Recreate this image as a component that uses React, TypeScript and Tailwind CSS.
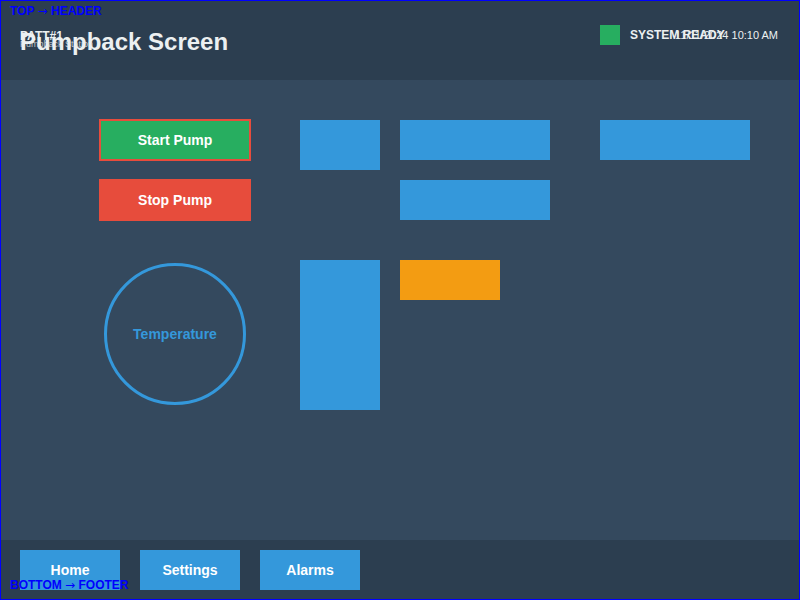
const font = "font-['Liberation_Sans',Arial,sans-serif]";

function Block({ className }: { className: string }) {
  return <div className={`bg-[#3498db] ${className}`} />;
}

function Arrow() {
  return <span className="font-['DejaVu_Sans',sans-serif] font-normal">→</span>;
}

export default function App() {
  return (
    <div className={`relative flex h-[600px] w-[800px] flex-col overflow-hidden bg-[#34495e] ${font}`}>
      {/* Header */}
      <header className="relative flex h-[80px] items-start justify-between bg-[#2c3e50] pl-5 pr-[22px]">
        <div className="relative pt-[29px]">
          <div className="text-[12px] font-bold leading-[14px] text-[#ecf0f1]">PATT#1</div>
          <div className="-mt-[5px] text-[9px] leading-[12px] text-[#bdc3c7]">Pumpback Station</div>
          <h1 className="absolute left-0 top-[30px] whitespace-nowrap text-[24px] font-bold leading-none text-[#ecf0f1]">
            Pumpback Screen
          </h1>
        </div>
        <div className="relative flex h-[80px] items-center pb-[10px]">
          <div className="h-5 w-5 bg-[#27ae60]" />
          <span className="ml-[10px] w-[148px] text-[12px] font-bold text-[#ecf0f1]">SYSTEM READY</span>
          <span className="absolute right-0 top-[28px] whitespace-nowrap text-[11px] leading-[14px] text-[#ecf0f1]">
            11/11/2024 10:10 AM
          </span>
        </div>
      </header>

      {/* Screen canvas */}
      <main className="flex flex-1 items-start pl-[99px] pt-[39px]">
        <div className="flex w-[152px] flex-col">
          <button className="h-[42px] border-2 border-[#e74c3c] bg-[#27ae60] text-[14px] font-bold text-white">
            Start Pump
          </button>
          <button className="mt-[18px] h-[42px] border-2 border-[#e74c3c] bg-[#e74c3c] text-[14px] font-bold text-white">
            Stop Pump
          </button>
          <div className="ml-[5px] mt-[42px] flex h-[142px] w-[142px] items-center justify-center rounded-full border-[3px] border-[#3498db]">
            <span className="mt-px text-[14px] font-bold text-[#3498db]">Temperature</span>
          </div>
        </div>

        <div className="ml-[49px] mt-px flex flex-col">
          <Block className="h-[50px] w-[80px]" />
          <Block className="mt-[90px] h-[150px] w-[80px]" />
        </div>

        <div className="ml-5 mt-px flex flex-col">
          <Block className="h-10 w-[150px]" />
          <Block className="mt-5 h-10 w-[150px]" />
          <div className="mt-10 h-10 w-[100px] bg-[#f39c12]" />
        </div>

        <div className="ml-[50px] mt-px">
          <Block className="h-10 w-[150px]" />
        </div>
      </main>

      {/* Footer */}
      <footer className="flex h-[60px] gap-5 bg-[#2c3e50] px-5 pt-[10px]">
        {["Home", "Settings", "Alarms"].map((label) => (
          <button key={label} className="h-10 w-[100px] bg-[#3498db] text-[14px] font-bold text-white">
            {label}
          </button>
        ))}
      </footer>

      {/* debug region labels */}
      <span className="absolute left-[10px] top-[4px] text-[12px] font-bold leading-[14px] text-[#0000ff]">
        TOP <Arrow /> HEADER
      </span>
      <span className="absolute left-[10px] top-[578px] text-[12px] font-bold leading-[14px] text-[#0000ff]">
        BOTTOM <Arrow /> FOOTER
      </span>
      <div className="pointer-events-none absolute inset-0 border border-[#0000ff]" />
    </div>
  );
}
